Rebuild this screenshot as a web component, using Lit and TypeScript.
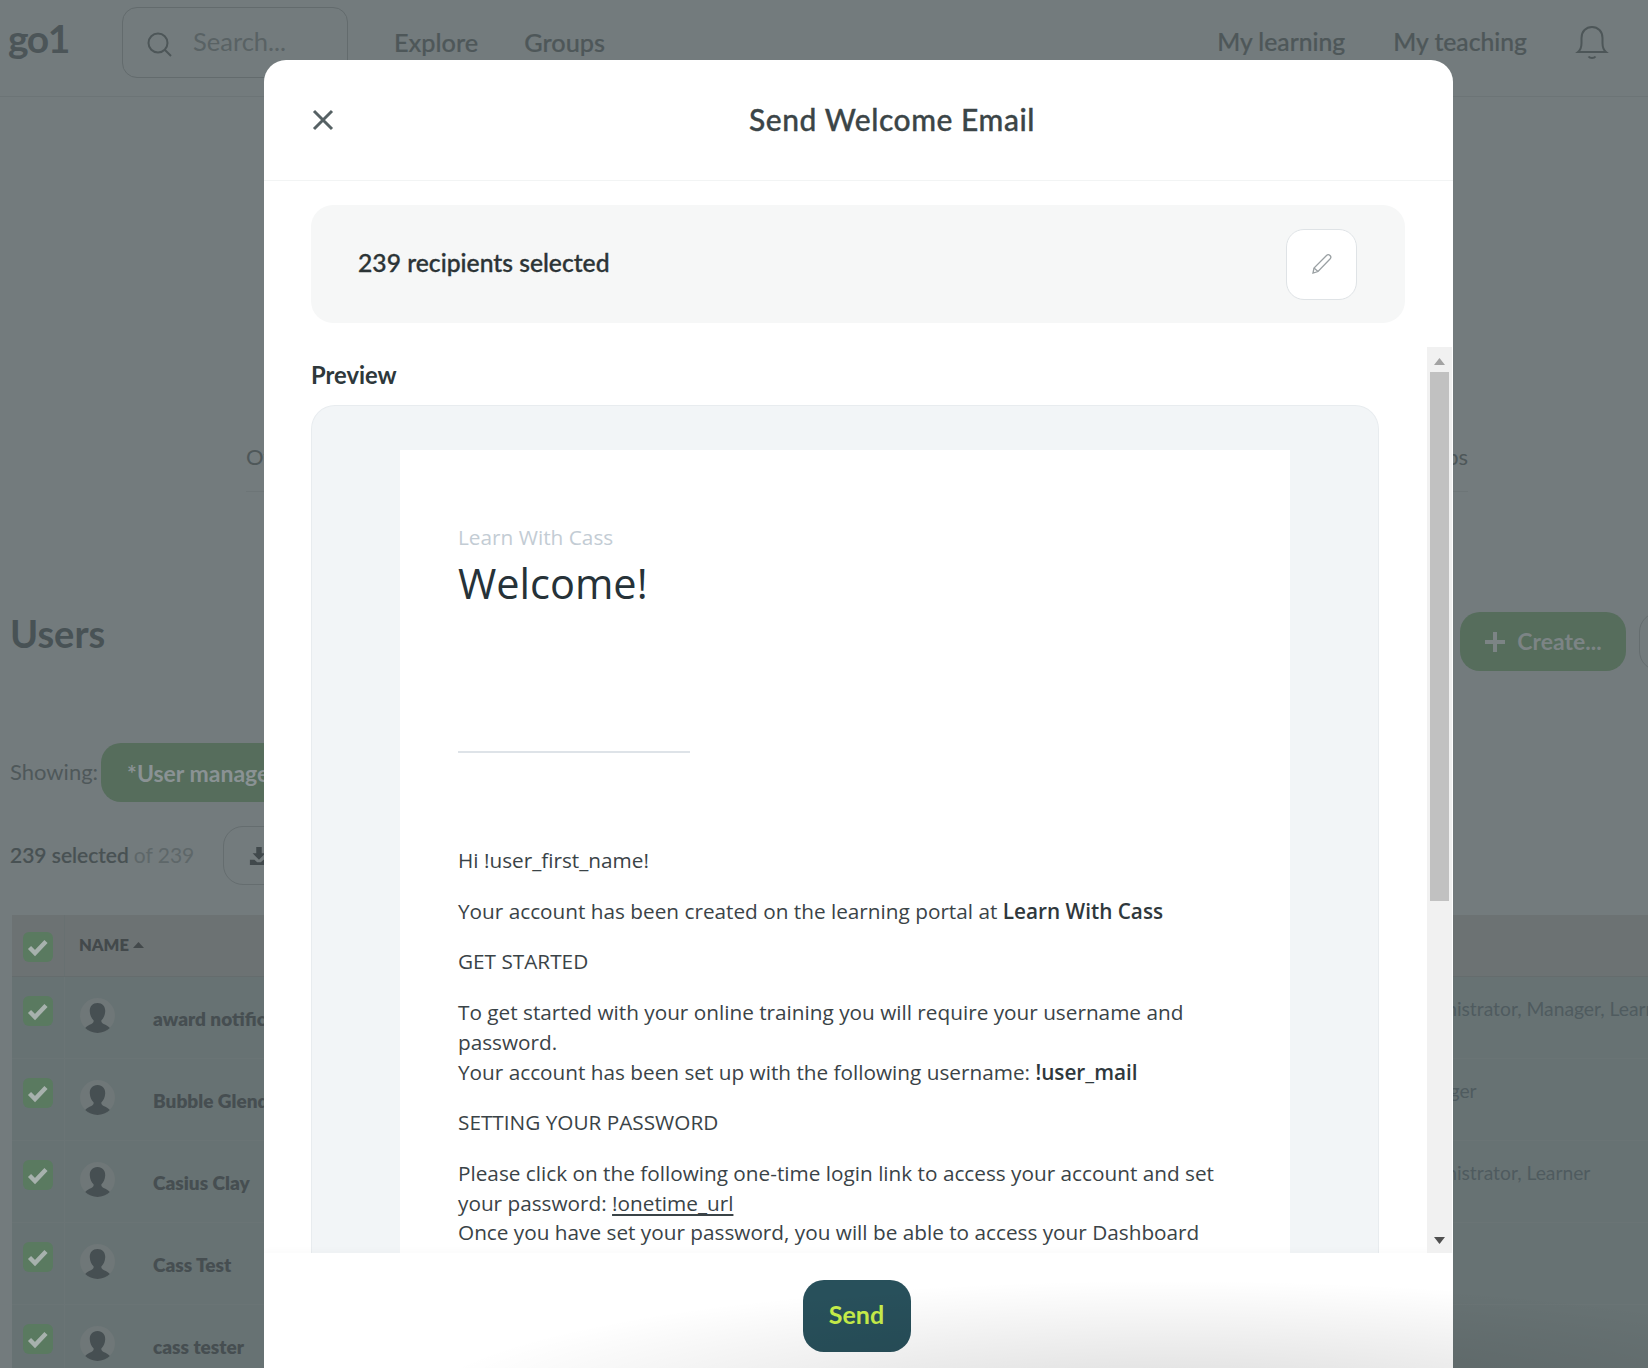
import { LitElement, html, css } from "lit";
import { customElement } from "lit/decorators.js";

const rows = [
  { name: "award notifications", role: "Administrator, Manager, Learner" },
  { name: "Bubble Glendale", role: "Manager" },
  { name: "Casius Clay", role: "Administrator, Learner" },
  { name: "Cass Test", role: "" },
  { name: "cass tester", role: "" },
];

const check = html`<svg class="check" viewBox="0 0 30 30"><rect width="30" height="30" rx="6" fill="#5a7a60"></rect><path d="M6.5 15.5l5.5 5.5 11-11.5" fill="none" stroke="#a7b1ad" stroke-width="4.4"></path></svg>`;

const avatar = html`<svg class="avatar" viewBox="0 0 35 35"><circle cx="17.500" cy="17.500" r="17.500" fill="#6f7778"></circle><path d="M17.500 5c5 0 8 3.600 7.700 8.500-.2 3.800-1.800 7-3.900 9 0 1.800.6 2.700 2.300 3.500 2.500 1.100 4.700 2 6.200 4-3 2.800-7.500 5-12.300 5s-9.300-2.200-12.300-5c1.500-2 3.700-2.900 6.200-4 1.700-.8 2.300-1.700 2.300-3.500-2.100-2-3.700-5.200-3.900-9C9.500 8.600 12.500 5 17.500 5z" fill="#464f52"></path></svg>`;

@customElement("app-root")
export class AppRoot extends LitElement {
  static styles = css`
    :host {
      display: block;
      position: relative;
      width: 1648px;
      height: 1368px;
      overflow: hidden;
      background: #737b7d;
      font-family: Lato, "Liberation Sans", sans-serif;
      color: #4a5356;
    }
    .page { height: 1368px; overflow: hidden; }
    .top {
      display: flex;
      align-items: center;
      height: 96px;
      border-bottom: 1px solid #6c7476;
      padding: 0 39px 0 8px;
    }
    .logo { font-size: 39px; font-weight: 700; letter-spacing: -1.5px; width: 114px; color: #4c5558; margin-top: -20px; }
    .search {
      display: flex;
      align-items: center;
      gap: 20px;
      box-sizing: border-box;
      width: 226px;
      height: 71px;
      margin-top: -11px;
      padding-left: 23px;
      border: 1px solid #636b6d;
      border-radius: 15px;
      font-size: 25.500px;
      color: #596264;
    }
    .search span { margin-top: -3px; }
    .search svg { width: 27px; height: 27px; margin-top: 3px; }
    .nav { font-size: 25.300px; font-weight: 500; color: #4e5759; margin-left: 46px; margin-top: -13px; -webkit-text-stroke: 0.2px #4e5759; }
    .nav.right { font-size: 24.700px; margin-left: 48px; }
    .spacer { flex: 1; }
    .top .bell { width: 34px; height: 36px; margin-left: 48px; margin-top: -10px; }
    .tabs {
      display: flex;
      justify-content: space-between;
      box-sizing: border-box;
      height: 52px;
      margin: 343px 180px 0 246px;
      border-bottom: 1px solid #6d7577;
      font-size: 22px;
      color: #4e5759;
      line-height: 34px;
    }
    .title-row {
      display: flex;
      justify-content: flex-end;
      align-items: flex-start;
      height: 59px;
      margin-top: 120px;
      padding-left: 10px;
      gap: 13px;
    }
    h1 { margin: -1px auto 0 0; font-size: 38px; line-height: 44px; font-weight: 700; color: #485255; }
    .create {
      display: flex;
      align-items: center;
      justify-content: center;
      gap: 11px;
      width: 166px;
      height: 59px;
      border-radius: 20px;
      background: #566d5c;
      color: #7c8485;
      font-size: 23px;
      font-weight: 700;
    }
    .create span { margin-top: -2px; }
    .create svg { width: 22px; height: 22px; }
    .ghost { box-sizing: border-box; width: 40px; height: 59px; margin-right: -31px; border: 1px solid #656d6f; border-radius: 20px; }
    .showing { display: flex; align-items: center; gap: 3px; height: 59px; margin-top: 72px; padding-left: 10px; font-size: 22px; color: #4f585a; }
    .showing > span { margin-top: -2px; }
    .pill {
      display: flex;
      align-items: center;
      height: 59px;
      padding: 0 26px;
      border-radius: 20px;
      background: #566d5c;
      color: #8a9294;
      font-size: 23px;
      font-weight: 700;
    }
    .selected { display: flex; align-items: center; height: 59px; margin-top: 24px; padding-left: 10px; font-size: 21px; color: #485153; font-weight: 500; -webkit-text-stroke: 0.2px #485153; }
    .selected .t { margin-top: -2px; }
    .selected .of { color: #5e6769; margin: -2px 0 0 5px; font-weight: 400; -webkit-text-stroke: 0; }
    .dl { display: flex; align-items: center; box-sizing: border-box; flex: none; width: 80px; height: 59px; margin-left: 29px; padding-left: 25px; border: 1px solid #656d6f; border-radius: 20px; }
    .dl svg { width: 20px; height: 20px; }
    .table { margin: 30px 0 0 12px; }
    .thead {
      display: flex;
      align-items: center;
      box-sizing: border-box;
      height: 62px;
      background: #6c7273;
      border-bottom: 1px solid #656c6d;
      font-size: 16.500px;
      font-weight: 800;
      color: #43494b;
    }
    .cc { box-sizing: border-box; flex: none; width: 53px; height: 100%; padding: 17px 0 0 11px; border-right: 1px solid #687071; }
    .thead .name { margin: -1px 0 0 14px; display: flex; align-items: center; gap: 4px; }
    .thead .name svg { width: 11px; height: 6px; }
    .check { display: block; width: 30px; height: 30px; }
    .row { display: flex; box-sizing: border-box; height: 82px; background: #677273; border-bottom: 1px solid #6a7475; }
    .row .cc { padding-top: 19px; border-right-color: #6a7475; }
    .avatar { display: block; width: 35px; height: 35px; margin: 21px 0 0 15px; flex: none; }
    .rname { margin: 29px 0 0 38px; font-size: 19px; line-height: 26px; font-weight: 800; color: #464e51; width: 1249px; flex: none; }
    .role { margin: 19px 0 0 0; font-size: 19.300px; line-height: 26px; color: #4f5b5f; white-space: nowrap; }

    .modal {
      position: absolute;
      left: 264px;
      top: 60px;
      width: 1189px;
      height: 1308px;
      display: flex;
      flex-direction: column;
      background: #fff;
      border-radius: 22px 22px 0 0;
      overflow: hidden;
      color: #2c3638;
    }
    .mhead {
      display: flex;
      align-items: center;
      flex: none;
      box-sizing: border-box;
      height: 121px;
      padding-left: 48px;
      border-bottom: 1px solid #f2f4f4;
    }
    .close { width: 22px; height: 22px; }
    .mtitle { margin: -3px 0 0 415px; font-size: 30px; font-weight: 500; color: #3b4547; letter-spacing: .55px; -webkit-text-stroke: 0.35px #3b4547; }
    .recipients {
      display: flex;
      align-items: center;
      justify-content: space-between;
      flex: none;
      box-sizing: border-box;
      height: 118px;
      margin: 24px 48px 0 47px;
      padding: 0 48px 0 47px;
      border-radius: 22px;
      background: #f6f7f7;
      font-size: 24.700px;
      font-weight: 500;
      color: #2c3436;
    }
    .recipients span { margin-top: -3px; -webkit-text-stroke: 0.35px #2c3436; }
    .edit {
      display: flex;
      align-items: center;
      justify-content: center;
      box-sizing: border-box;
      width: 71px;
      height: 71px;
      background: #fff;
      border: 1px solid #dfe3e6;
      border-radius: 18px;
    }
    .edit svg { width: 24px; height: 24px; }
    .body { display: flex; flex: 1; min-height: 0; margin-top: 24px; }
    .scroll { flex: 1; min-width: 0; overflow: hidden; padding: 12px 48px 0 47px; }
    .label { font-size: 23.800px; line-height: 32px; font-weight: 700; color: #2e383b; }
    .preview {
      box-sizing: border-box;
      height: 900px;
      margin-top: 14px;
      padding: 44px 88px 0 88px;
      background: #f2f5f7;
      border: 1px solid #e8ecef;
      border-bottom: 0;
      border-radius: 24px 24px 0 0;
    }
    .mail {
      height: 900px;
      padding: 71px 58px 0 58px;
      background: #fff;
      font-family: "Open Sans", "Noto Sans", sans-serif;
      font-size: 20.750px;
      line-height: 29.700px;
      color: #3a4347;
    }
    .brand { font-size: 20.800px; line-height: 33px; color: #c3ccd4; }
    .welcome { margin: 0; font-size: 41.500px; line-height: 58px; font-weight: 400; color: #263238; }
    .rule { width: 232px; height: 2px; background: #dee3e8; margin: 139px 0 93px; }
    .mail p { margin: 0 0 21px; }
    .mail b { font-weight: 600; color: #2f383c; }
    .mail u { text-underline-offset: 3px; }
    .sb { position: relative; flex: none; width: 25px; margin-right: 1px; background: #f1f1f1; }
    .thumb { position: absolute; left: 3px; right: 3px; top: 25px; height: 529px; background: #c1c1c1; }
    .arrow { position: absolute; left: 7px; width: 11px; height: 7px; }
    .arrow.up { top: 11px; }
    .arrow.down { bottom: 9px; }
    .foot {
      display: flex;
      justify-content: center;
      flex: none;
      box-sizing: border-box;
      height: 115px;
      padding: 27px 4px 0 0;
      background: #fff;
      box-shadow: 0 -3px 6px rgba(0, 0, 0, 0.02);
    }
    .send {
      display: flex;
      align-items: center;
      justify-content: center;
      box-sizing: border-box;
      width: 108px;
      height: 72px;
      padding-bottom: 4px;
      border-radius: 21px;
      background: #28505b;
      color: #c8ef4a;
      font-size: 25px;
      font-weight: 700;
    }
    .shade {
      position: absolute;
      inset: 0;
      pointer-events: none;
      background: radial-gradient(ellipse 760px 130px at 1170px 1410px, rgba(0, 0, 0, 0.15), rgba(0, 0, 0, 0));
    }
  `;

  render() {
    return html`
      <div class="page">
        <div class="top">
          <div class="logo">go1</div>
          <div class="search">
            <svg viewBox="0 0 27 27" fill="none" stroke="#4d5658" stroke-width="2"><circle cx="12" cy="12" r="9.500"></circle><path d="M19 19l6 6"></path></svg>
            <span>Search...</span>
          </div>
          <div class="nav">Explore</div>
          <div class="nav">Groups</div>
          <div class="spacer"></div>
          <div class="nav right">My learning</div>
          <div class="nav right">My teaching</div>
          <svg class="bell" viewBox="0 0 34 36" fill="none" stroke="#4d5658" stroke-width="2"><path d="M3 27h28c-2.500-2-3.500-4.500-3.500-9v-5C27.500 6.500 23 2 17 2S6.500 6.500 6.500 13v5c0 4.500-1 7-3.500 9z"></path><path d="M13.500 31.500c1.500 2 5.500 2 7 0"></path></svg>
        </div>
        <div class="tabs"><span>Overview</span><span>Groups</span></div>
        <div class="title-row">
          <h1>Users</h1>
          <div class="create">
            <svg viewBox="0 0 22 22" stroke="#7c8485" stroke-width="4"><path d="M11 1v20M1 11h20"></path></svg>
            <span>Create...</span>
          </div>
          <div class="ghost"></div>
        </div>
        <div class="showing"><span>Showing:</span> <div class="pill">*User management</div></div>
        <div class="selected"><span class="t">239 selected</span> <span class="of">of 239</span>
          <div class="dl"><svg viewBox="0 0 22 22" fill="#41494c"><path d="M8 1h6v7h4l-7 7-7-7h4zM1 15h5l3 3h4l3-3h5v6H1z"></path></svg></div>
        </div>
        <div class="table">
          <div class="thead">
            <div class="cc">${check}</div>
            <div class="name">NAME <svg viewBox="0 0 11 6" fill="#43494b"><path d="M5.500 0L11 6H0z"></path></svg></div>
          </div>
          ${rows.map(
            (r) => html`<div class="row">
              <div class="cc">${check}</div>
              ${avatar}
              <div class="rname">${r.name}</div>
              <div class="role">${r.role}</div>
            </div>`
          )}
        </div>
      </div>

      <div class="modal">
        <div class="mhead">
          <svg class="close" viewBox="0 0 22 22" stroke="#566164" stroke-width="3" fill="none"><path d="M2 2l18 18M20 2L2 20"></path></svg>
          <div class="mtitle">Send Welcome Email</div>
        </div>
        <div class="recipients">
          <span>239 recipients selected</span>
          <div class="edit">
            <svg viewBox="0 0 24 24" fill="none" stroke="#9aa0a3" stroke-width="1.300"><path d="M3 21l1-5L16.500 3.500c1-1 2.500-1 3.500 0s1 2.500 0 3.500L8 19.500z"></path><path d="M4 16l4 3.500"></path></svg>
          </div>
        </div>
        <div class="body">
          <div class="scroll">
            <div class="label">Preview</div>
            <div class="preview">
              <div class="mail">
                <div class="brand">Learn With Cass</div>
                <h2 class="welcome">Welcome!</h2>
                <div class="rule"></div>
                <p>Hi !user_first_name!</p>
                <p>Your account has been created on the learning portal at <b>Learn With Cass</b></p>
                <p>GET STARTED</p>
                <p>To get started with your online training you will require your username and password.<br />Your account has been set up with the following username: <b>!user_mail</b></p>
                <p>SETTING YOUR PASSWORD</p>
                <p>Please click on the following one-time login link to access your account and set your password: <u>!onetime_url</u><br />Once you have set your password, you will be able to access your Dashboard</p>
              </div>
            </div>
          </div>
          <div class="sb">
            <svg class="arrow up" viewBox="0 0 11 7" fill="#a3a3a3"><path d="M5.500 0L11 7H0z"></path></svg>
            <div class="thumb"></div>
            <svg class="arrow down" viewBox="0 0 11 7" fill="#505050"><path d="M0 0h11L5.500 7z"></path></svg>
          </div>
        </div>
        <div class="foot"><div class="send">Send</div></div>
      </div>
      <div class="shade"></div>
    `;
  }
}
